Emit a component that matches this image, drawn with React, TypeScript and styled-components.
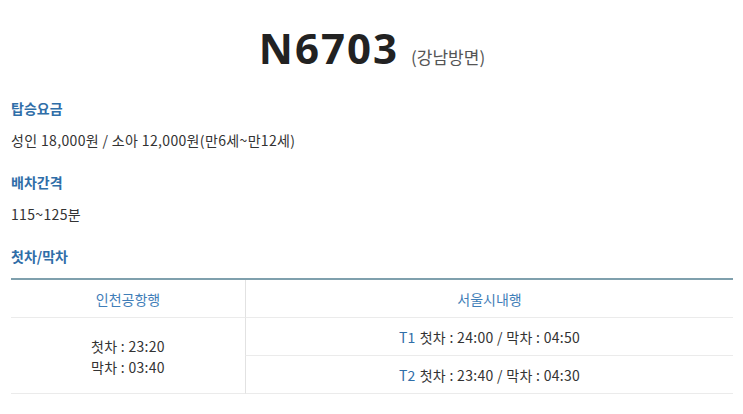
import React from 'react';
import styled, { createGlobalStyle } from 'styled-components';

const GlobalStyle = createGlobalStyle`
  html, body {
    margin: 0;
    padding: 0;
    background: #fff;
  }
  body {
    font-family: 'Noto Sans CJK KR', 'Noto Sans', sans-serif;
    color: #333;
  }
`;

const Page = styled.div`
  width: 743px;
  padding: 0 10px 0 11px;
  box-sizing: border-box;
`;

const Header = styled.div`
  height: 98px;
  display: flex;
  align-items: baseline;
  justify-content: center;
  gap: 12px;
  padding-top: 22px;
  box-sizing: border-box;
`;

const Title = styled.h1`
  margin: 0;
  font-family: 'Noto Sans', 'Liberation Sans', sans-serif;
  font-size: 42px;
  font-weight: 700;
  color: #222;
  line-height: 52px;
  letter-spacing: 2px;
`;

const Direction = styled.span`
  font-size: 17px;
  color: #555;
`;

const Section = styled.div`
  margin-bottom: 22px;
`;

const Label = styled.div`
  font-size: 14px;
  font-weight: 700;
  color: #2f6ea8;
  line-height: 20px;
  margin-bottom: 12px;
`;

const Text = styled.div`
  font-size: 14px;
  line-height: 20px;
  color: #333;
  letter-spacing: 0.35px;
`;

const Table = styled.div`
  display: grid;
  grid-template-columns: 234px 1fr;
  border-top: 2px solid #7fa0ad;
`;

const HeadCell = styled.div<{ divider?: boolean }>`
  height: 38px;
  display: flex;
  align-items: center;
  justify-content: center;
  font-size: 14px;
  color: #3f7eb8;
  border-bottom: 1px solid #ebebeb;
  border-left: ${p => (p.divider ? '1px solid #e2e2e2' : 'none')};
  box-sizing: border-box;
`;

const LeftCell = styled.div`
  grid-row: span 2;
  display: flex;
  flex-direction: column;
  align-items: center;
  justify-content: center;
  font-size: 14px;
  line-height: 21px;
  color: #333;
  letter-spacing: 0.3px;
  border-bottom: 1px solid #ebebeb;
  padding-top: 2px;
`;

const RightCell = styled.div`
  height: 38px;
  display: flex;
  align-items: center;
  justify-content: center;
  font-size: 14px;
  color: #333;
  letter-spacing: 0.3px;
  border-left: 1px solid #e2e2e2;
  border-bottom: 1px solid #ebebeb;
  box-sizing: border-box;
`;

const Terminal = styled.span`
  color: #2f6ea8;
  margin-right: 4px;
`;

export default function App() {
  return (
    <>
      <GlobalStyle />
      <Page>
        <Header>
          <Title>N6703</Title>
          <Direction>(강남방면)</Direction>
        </Header>
        <Section>
          <Label>탑승요금</Label>
          <Text>성인 18,000원 / 소아 12,000원(만6세~만12세)</Text>
        </Section>
        <Section>
          <Label>배차간격</Label>
          <Text>115~125분</Text>
        </Section>
        <Label>첫차/막차</Label>
        <Table>
          <HeadCell>인천공항행</HeadCell>
          <HeadCell divider>서울시내행</HeadCell>
          <LeftCell>
            <span>첫차 : 23:20</span>
            <span>막차 : 03:40</span>
          </LeftCell>
          <RightCell>
            <Terminal>T1</Terminal>첫차 : 24:00 / 막차 : 04:50
          </RightCell>
          <RightCell>
            <Terminal>T2</Terminal>첫차 : 23:40 / 막차 : 04:30
          </RightCell>
        </Table>
      </Page>
    </>
  );
}
